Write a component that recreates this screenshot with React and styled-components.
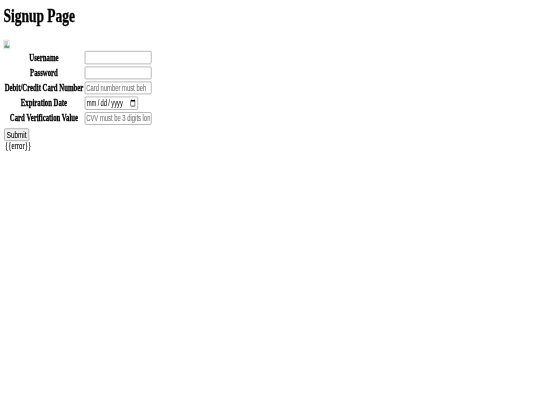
import React from "react";
import styled, { createGlobalStyle } from "styled-components";

const Global = createGlobalStyle`
  html, body { margin: 0; padding: 0; background: #fff; overflow: hidden; }
`;

const Viewport = styled.div`
  width: 540px;
  height: 405px;
  overflow: hidden;
  background: #fff;
  filter: blur(0.3px);
`;

const Page = styled.main`
  width: 1264px;
  height: 659px;
  padding: 8px;
  transform: scale(0.4219, 0.6);
  transform-origin: 0 0;
  font-family: "Liberation Serif", serif;
  font-size: 16px;
  color: #000;
`;

const Title = styled.h1`
  margin: 0 0 21.44px;
  font-size: 32px;
  font-weight: 700;
  line-height: 37px;
  -webkit-text-stroke: 0.6px #000;
`;

const BrokenIcon = styled.svg`
  display: block;
  width: 16px;
  height: 16px;
`;

const Form = styled.form`
  display: block;
  margin: 0;
`;

const Fields = styled.table`
  border-spacing: 2px;
  border-collapse: separate;
`;

const Label = styled.th`
  padding: 1px;
  font-weight: 700;
  text-align: center;
  -webkit-text-stroke: 0.5px #000;
`;

const Cell = styled.td`
  padding: 1px;
`;

const Input = styled.input`
  box-sizing: border-box;
  width: ${(p) => (p.type === "date" ? "126px" : "158px")};
  height: 21.33px;
  font-family: "Liberation Sans", Arial, sans-serif;
  font-size: 13.9px;
  padding: 1px 2px;
  border: 1px solid #767676;
  border-radius: 3px;
  background: #fff;
  display: block;
  &::placeholder { color: #757575; -webkit-text-stroke: 0.15px #757575; }
  &::-webkit-datetime-edit-text { padding: 0 2px; }
`;

const Submit = styled.button`
  display: block;
  height: 21.33px;
  width: 59px;
  margin: 3px 0 0 2px;
  padding: 1px 4px;
  font-family: "Liberation Sans", Arial, sans-serif;
  font-size: 15px;
  -webkit-text-stroke: 0.15px #000;
  color: #000;
  background: #efefef;
  border: 1px solid #767676;
  border-radius: 3px;
`;

const ErrorText = styled.p`
  margin: 0;
  line-height: 18px;
  padding-left: 4px;
  -webkit-text-stroke: 0.2px #000;
`;

const rows = [
  { label: "Username", type: "text" },
  { label: "Password", type: "password" },
  { label: "Debit/Credit Card Number", type: "text", placeholder: "Card number must beh" },
  { label: "Expiration Date", type: "date" },
  { label: "Card Verification Value", type: "text", placeholder: "CVV must be 3 digits long" },
];

export default function App() {
  return (
    <Viewport>
      <Global />
      <Page>
        <Title>Signup Page</Title>
        <BrokenIcon viewBox="0 0 16 16" aria-hidden="true">
          <path d="M.5 .5h11l4 4v11H.5z" fill="#fff" stroke="#b5b5b5" />
          <path d="M2 2h9v6l-9 3z" fill="#b9d0f2" />
          <path d="M2 14v-3l6-3 2 3 4-2v5z" fill="#62ad58" />
        </BrokenIcon>
        <Form onSubmit={(e) => e.preventDefault()}>
          <Fields>
            <tbody>
              {rows.map((r) => (
                <tr key={r.label}>
                  <Label>{r.label}</Label>
                  <Cell>
                    <Input type={r.type} placeholder={r.placeholder} />
                  </Cell>
                </tr>
              ))}
            </tbody>
          </Fields>
          <Submit type="submit">Submit</Submit>
        </Form>
        <ErrorText>{"{{error}}"}</ErrorText>
      </Page>
    </Viewport>
  );
}
